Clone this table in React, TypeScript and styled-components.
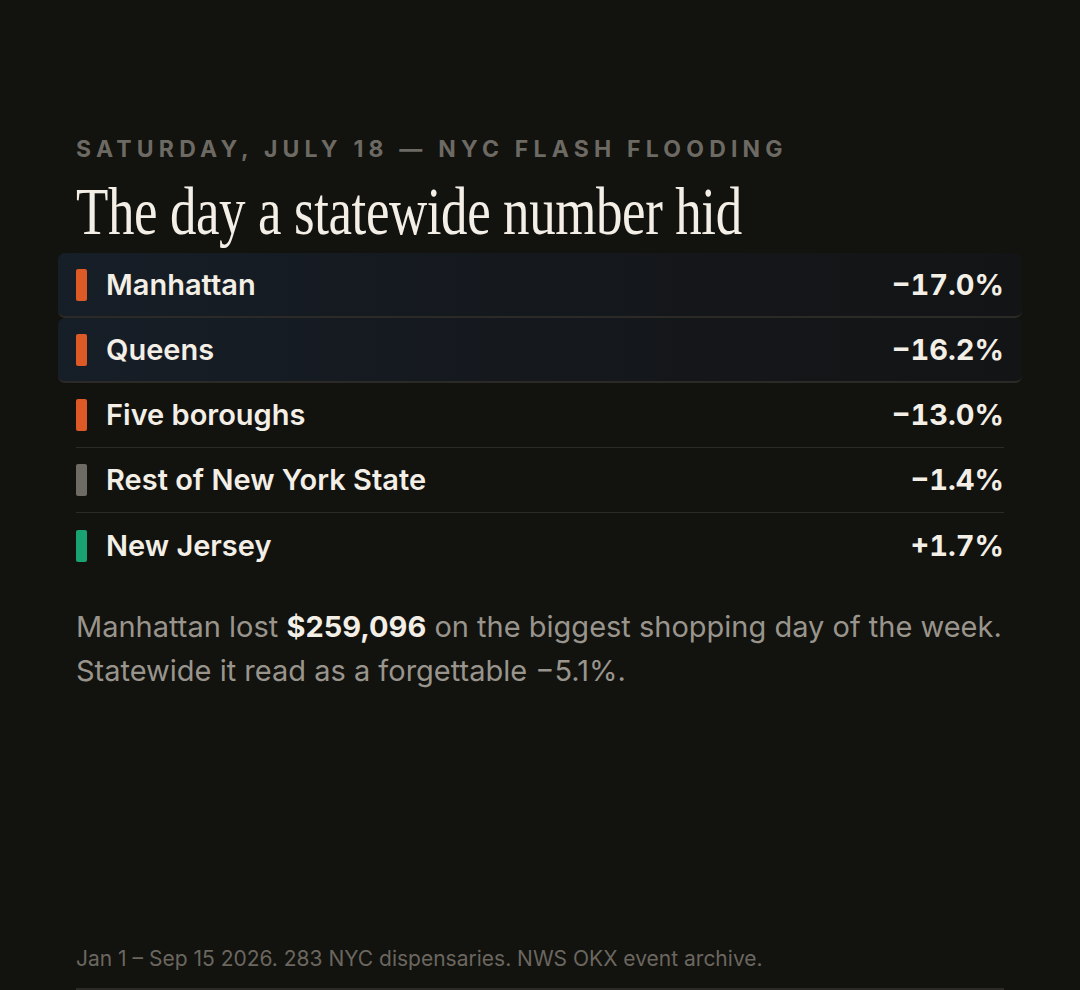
import React from "react";
import styled, { createGlobalStyle } from "styled-components";

const Global = createGlobalStyle`
  html, body { margin: 0; padding: 0; background: #12120f; }
  body { font-family: Inter, "Noto Sans", sans-serif; -webkit-font-smoothing: antialiased; }
  * { box-sizing: border-box; }
`;

const Page = styled.main`
  min-height: 990px;
  padding: 134px 76px 0;
  display: flex;
  flex-direction: column;
  background: #12120f;
`;

const Eyebrow = styled.div`
  font-family: Inter, sans-serif;
  font-weight: 700;
  font-size: 23px;
  letter-spacing: 5.2px;
  line-height: 30px;
  color: #6d6a63;
  text-transform: uppercase;
  white-space: nowrap;
`;

const Title = styled.h1`
  margin: 14px 0 0;
  font-family: "Liberation Serif", serif;
  font-weight: 400;
  font-size: 67px;
  line-height: 66px;
  color: #f3efe6;
  white-space: nowrap;
  display: inline-block;
  transform: scaleX(0.79);
  transform-origin: left center;
  letter-spacing: -0.5px;
`;

const List = styled.div`
  margin-top: 9px;
  display: flex;
  flex-direction: column;
`;

const Row = styled.div<{ $hi?: boolean; $last?: boolean }>`
  display: flex;
  align-items: center;
  height: 65px;
  border-bottom: ${(p) => (p.$last ? "none" : "1px solid #2b2a26")};
  ${(p) =>
    p.$hi
      ? `
    margin: 0 -18px;
    padding: 0 18px;
    border-radius: 7px;
    background: linear-gradient(90deg, #161e27 0%, #141619 70%, #131415 100%);
    border-bottom: 2px solid #2b2a26;
  `
      : ""}
`;

const Bar = styled.span<{ $color: string }>`
  width: 11px;
  height: 32px;
  border-radius: 2px;
  background: ${(p) => p.$color};
  flex: none;
`;

const Label = styled.span`
  margin-left: 19px;
  font-weight: 600;
  font-size: 29px;
  line-height: 34px;
  color: #f3efe6;
`;

const Value = styled.span`
  margin-left: auto;
  font-weight: 700;
  font-size: 29px;
  line-height: 34px;
  color: #f3efe6;
  font-variant-numeric: tabular-nums;
`;

const Para = styled.p`
  margin: 27px 0 0;
  font-size: 29px;
  line-height: 44px;
  color: #99958c;
`;

const Strong = styled.strong`
  color: #f3efe6;
  font-weight: 700;
`;

const Footer = styled.footer`
  margin-top: auto;
  padding-bottom: 15px;
  font-size: 21px;
  line-height: 28px;
  color: #6b675f;
  border-bottom: 2px solid #2b2a26;
`;

const rows = [
  { label: "Manhattan", value: "\u221217.0%", color: "#dd5a26", hi: true },
  { label: "Queens", value: "\u221216.2%", color: "#dd5a26", hi: true },
  { label: "Five boroughs", value: "\u221213.0%", color: "#dd5a26" },
  { label: "Rest of New York State", value: "\u22121.4%", color: "#6e6a64" },
  { label: "New Jersey", value: "+1.7%", color: "#1aa372" },
];

export default function App() {
  return (
    <>
      <Global />
      <Page>
        <Eyebrow>Saturday, July 18 — NYC flash flooding</Eyebrow>
        <div>
          <Title>The day a statewide number hid</Title>
        </div>
        <List>
          {rows.map((r, i) => (
            <Row key={r.label} $hi={r.hi} $last={i === rows.length - 1}>
              <Bar $color={r.color} />
              <Label>{r.label}</Label>
              <Value>{r.value}</Value>
            </Row>
          ))}
        </List>
        <Para>
          Manhattan lost <Strong>$259,096</Strong> on the biggest shopping day of the week.
          Statewide it read as a forgettable −5.1%.
        </Para>
        <Footer>Jan 1 – Sep 15 2026. 283 NYC dispensaries. NWS OKX event archive.</Footer>
      </Page>
    </>
  );
}
